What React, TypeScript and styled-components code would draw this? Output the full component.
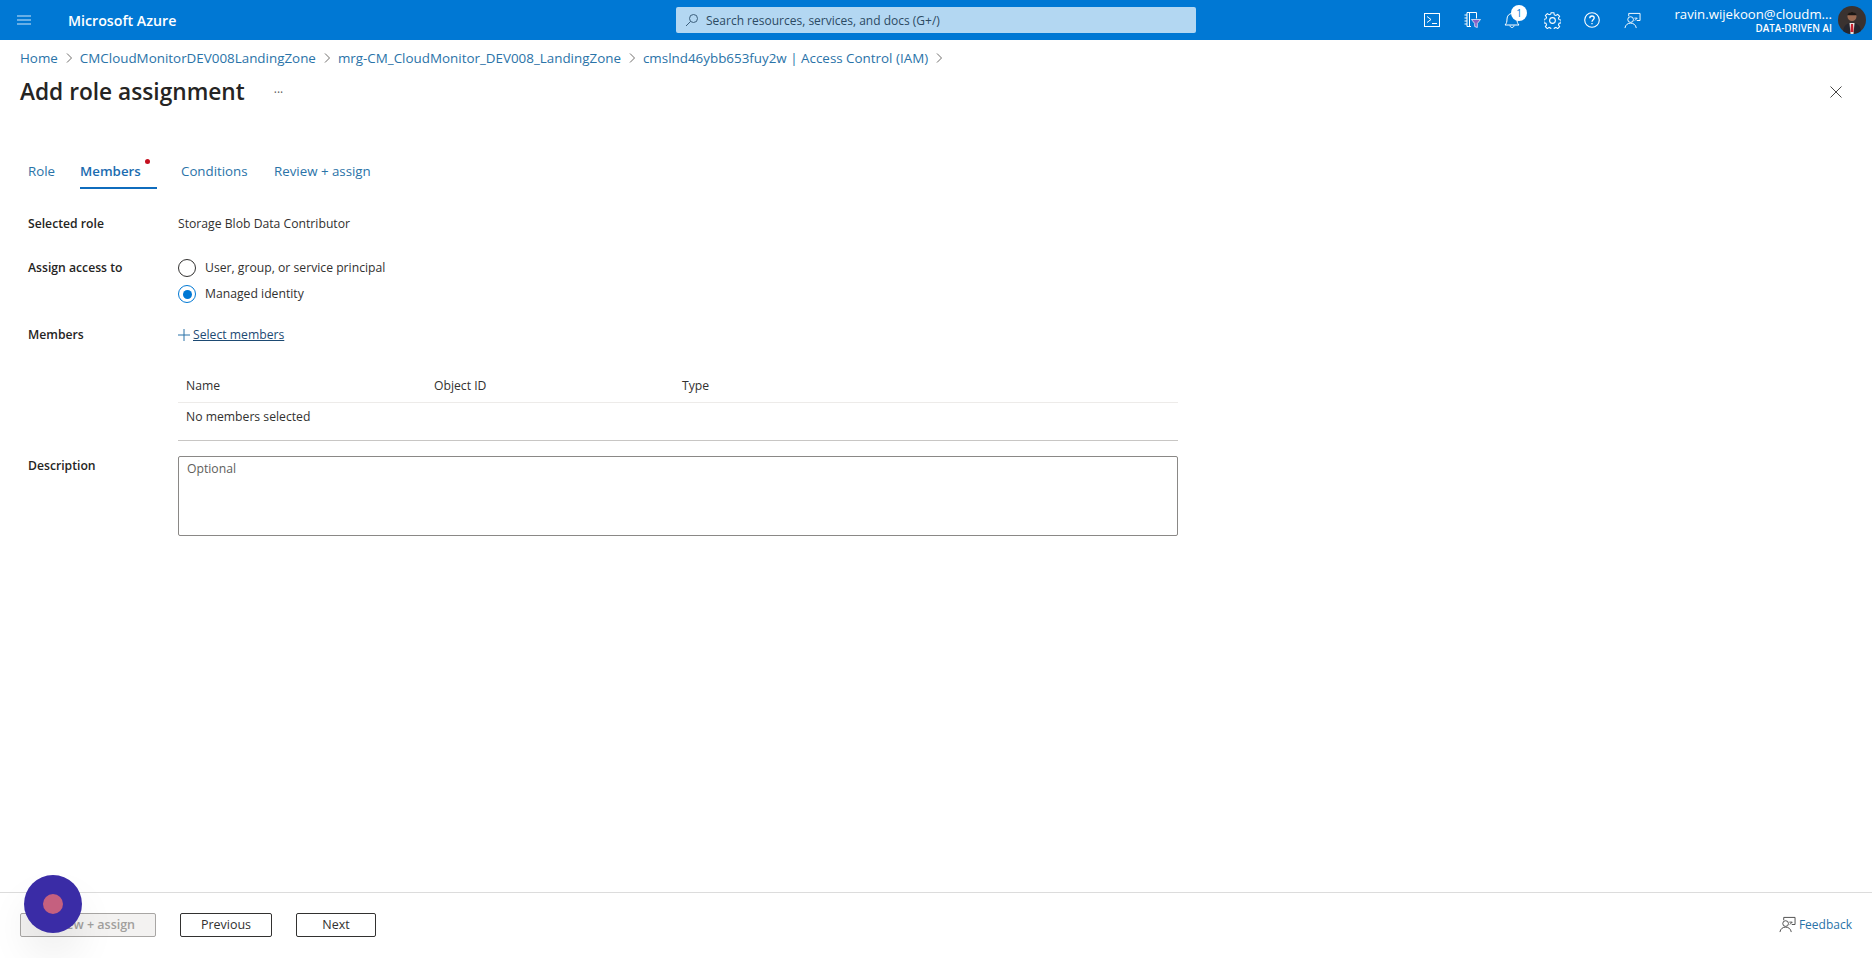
import { Fragment } from "react";
import styled, { createGlobalStyle } from "styled-components";

const GlobalStyle = createGlobalStyle`
  html, body {
    margin: 0;
    padding: 0;
    background: white;
    font-family: "Open Sans", "Liberation Sans", sans-serif;
    color: #323130;
  }
  * {
    box-sizing: border-box;
  }
`;

const Page = styled.div`
  position: relative;
  display: flex;
  flex-direction: column;
  width: 100%;
  height: 100vh;
  overflow: hidden;
`;

const TopBar = styled.header`
  display: flex;
  align-items: center;
  flex: none;
  height: 40px;
  background-color: #0078d4;
  color: white;
`;

const Brand = styled.div`
  display: flex;
  align-items: center;
  width: 676px;
  padding-left: 17px;
`;

const Burger = styled.svg`
  width: 14px;
  height: 10px;
  margin-right: 37px;
`;

const BrandName = styled.span`
  font-size: 14.2px;
  font-weight: 600;
`;

const SearchBox = styled.div`
  display: flex;
  align-items: center;
  gap: 7px;
  width: 520px;
  height: 26px;
  padding-left: 9px;
  border-radius: 2px;
  background-color: #b3d7f2;
  color: #2c4a63;
  font-size: 12px;
`;

const IconRow = styled.div`
  display: flex;
  margin-left: 216px;
`;

const IconButton = styled.div`
  position: relative;
  display: flex;
  align-items: center;
  justify-content: center;
  width: 40px;
  height: 40px;
`;

const Badge = styled.span`
  position: absolute;
  top: 5px;
  left: 19px;
  width: 16px;
  height: 16px;
  border-radius: 50%;
  background: white;
  color: #0078d4;
  font-size: 10px;
  line-height: 16px;
  text-align: center;
`;

const Account = styled.div`
  display: flex;
  flex-direction: column;
  align-items: flex-end;
  width: 180px;
  margin-right: 6px;
`;

const Email = styled.span`
  font-size: 13.2px;
  line-height: 18px;
  white-space: nowrap;
`;

const Tenant = styled.span`
  font-size: 9.8px;
  font-weight: 600;
  line-height: 12px;
`;

const Avatar = styled.svg`
  width: 28px;
  height: 28px;
`;

const Breadcrumb = styled.nav`
  display: flex;
  align-items: center;
  flex: none;
  gap: 6px;
  height: 36px;
  padding-left: 20px;
  color: #2a73a8;
  font-size: 13.4px;
`;

const Chevron = styled.svg`
  width: 6px;
  height: 10px;
  margin: 0 2px;
`;

const TitleRow = styled.div`
  display: flex;
  align-items: center;
  flex: none;
  height: 32px;
  padding: 0 30px 2px 20px;
`;

const Title = styled.h1`
  margin: 0;
  font-size: 22.7px;
  font-weight: 600;
  color: #252423;
`;

const More = styled.span`
  margin-left: 29px;
  margin-top: 2px;
  font-size: 12px;
  color: #605e5c;
`;

const CloseIcon = styled.svg`
  width: 12px;
  height: 12px;
  margin-left: auto;
  margin-top: 2px;
`;

const Tabs = styled.div`
  display: flex;
  flex: none;
  margin-top: 51px;
  padding-left: 28px;
`;

const Tab = styled.div<{ $active?: boolean; $width: number }>`
  position: relative;
  width: ${(p) => p.$width}px;
  height: 30px;
  color: ${(p) => (p.$active ? "#1b6cb0" : "#2a73a8")};
  font-size: 13.3px;
  font-weight: ${(p) => (p.$active ? 600 : 400)};
  line-height: 24px;

  &::after {
    content: "";
    display: ${(p) => (p.$active ? "block" : "none")};
    position: absolute;
    left: 0;
    bottom: 0;
    width: 77px;
    height: 2px;
    background-color: #0f6cbd;
  }
`;

const RequiredDot = styled.span`
  position: absolute;
  top: 0;
  left: 65px;
  width: 5px;
  height: 5px;
  border-radius: 50%;
  background-color: #c50f1f;
`;

const Form = styled.div`
  display: grid;
  grid-template-columns: 150px 1000px;
  padding: 25px 0 0 28px;
  font-size: 12.2px;
`;

const Label = styled.div<{ $gap: number }>`
  margin-bottom: ${(p) => p.$gap}px;
  font-weight: 600;
  line-height: 20px;
  color: #252423;
`;

const Value = styled.div<{ $gap: number }>`
  margin-bottom: ${(p) => p.$gap}px;
  line-height: 20px;
`;

const RadioRow = styled.div`
  display: flex;
  align-items: center;
  gap: 9px;
  height: 26px;
  margin-top: -3px;
  &:last-child {
    margin-top: 0;
  }
`;

const Radio = styled.span<{ $checked?: boolean }>`
  display: flex;
  align-items: center;
  justify-content: center;
  width: 18px;
  height: 18px;
  border: 1.5px solid ${(p) => (p.$checked ? "#0078d4" : "#323130")};
  border-radius: 50%;

  &::after {
    content: "";
    display: ${(p) => (p.$checked ? "block" : "none")};
    width: 9px;
    height: 9px;
    border-radius: 50%;
    background-color: #0078d4;
  }
`;

const SelectLink = styled.a`
  display: inline-flex;
  align-items: center;
  color: #1d4a73;
  text-decoration: underline;
`;

const PlusIcon = styled.svg`
  width: 12px;
  height: 12px;
  margin-right: 3px;
`;

const Table = styled.div`
  margin-top: 22px;
  margin-bottom: 15px;
  border-bottom: 1px solid #c8c6c4;
`;

const TableRow = styled.div<{ $head?: boolean }>`
  display: grid;
  grid-template-columns: repeat(3, 248px);
  align-items: center;
  height: ${(p) => (p.$head ? "34px" : "37px")};
  padding-left: 8px;
  padding-bottom: ${(p) => (p.$head ? "0" : "10px")};
  border-bottom: ${(p) => (p.$head ? "1px solid #edebe9" : "none")};
  color: #323130;
`;

const Textarea = styled.div`
  height: 80px;
  padding: 3px 8px;
  border: 1px solid #8a8886;
  border-radius: 2px;
  color: #605e5c;
  line-height: 18px;
`;

const Footer = styled.footer`
  display: flex;
  align-items: center;
  flex: none;
  gap: 24px;
  height: 66px;
  margin-top: auto;
  padding: 0 20px 2px 20px;
  border-top: 1px solid #dcdcdc;
`;

const FooterButton = styled.button<{ $disabled?: boolean; $width: number }>`
  width: ${(p) => p.$width}px;
  height: 24px;
  padding: 0;
  border: 1px solid ${(p) => (p.$disabled ? "#a8a6a4" : "#323130")};
  border-radius: 2px;
  background: ${(p) => (p.$disabled ? "#f3f2f1" : "white")};
  color: ${(p) => (p.$disabled ? "#a19f9d" : "#323130")};
  font-family: inherit;
  font-size: 12.5px;
  font-weight: ${(p) => (p.$disabled ? 600 : 400)};
  line-height: 22px;
`;

const FeedbackLink = styled.a`
  display: flex;
  align-items: center;
  gap: 3px;
  margin-left: auto;
  color: #2a73a8;
  font-size: 12px;
  text-decoration: none;
`;

const RecordDot = styled.div`
  position: absolute;
  left: 24px;
  top: 875px;
  display: flex;
  align-items: center;
  justify-content: center;
  width: 58px;
  height: 58px;
  border-radius: 50%;
  background-color: #3a2ca6;
  box-shadow: 0 24px 40px rgba(0, 0, 0, 0.07);

  &::after {
    content: "";
    width: 20px;
    height: 20px;
    border-radius: 50%;
    background-color: #c5607f;
  }
`;

function FeedbackIcon({ color, size }: { color: string; size: number }) {
  return (
    <svg width={size} height={size} viewBox="0 0 18 18" fill="none" stroke={color} strokeWidth="1">
      <path d="M5 4.5V1.5H17V9H13.5" />
      <circle cx="7" cy="8" r="3" />
      <path d="M1 17c.5-3.5 3-5.2 6-5.2s5.5 1.7 6 5.2" />
      <path d="M11 6.5h3l-2.5 2.5" />
    </svg>
  );
}

function CrumbChevron() {
  return (
    <Chevron viewBox="0 0 6 10" fill="none" stroke="#605e5c" strokeWidth="0.9">
      <path d="M1 .5 5.5 5 1 9.5" />
    </Chevron>
  );
}

export default function App() {
  const crumbs = [
    "Home",
    "CMCloudMonitorDEV008LandingZone",
    "mrg-CM_CloudMonitor_DEV008_LandingZone",
    "cmslnd46ybb653fuy2w | Access Control (IAM)",
  ];

  return (
    <Page>
      <GlobalStyle />
      <TopBar>
        <Brand>
          <Burger viewBox="0 0 14 10" fill="none" stroke="#cfe6f8" strokeWidth="1.2">
            <path d="M0 1h14M0 5h14M0 9h14" />
          </Burger>
          <BrandName>Microsoft Azure</BrandName>
        </Brand>
        <SearchBox>
          <svg width="14" height="14" viewBox="0 0 14 14" fill="none" stroke="#3c5f7c" strokeWidth="1">
            <circle cx="8.5" cy="5.5" r="4" />
            <path d="M5.5 8.5 1 13" />
          </svg>
          Search resources, services, and docs (G+/)
        </SearchBox>
        <IconRow>
          <IconButton>
            <svg width="16" height="14" viewBox="0 0 16 14" fill="none" stroke="white" strokeWidth="1">
              <rect x=".5" y=".5" width="15" height="13" />
              <path d="M3 3.5 7 6.5 3 9.5M8 10.5h5" />
            </svg>
          </IconButton>
          <IconButton>
            <svg width="17" height="16" viewBox="0 0 17 16" fill="none">
              <path d="M3 .5h9.500v6M7 14.500H3V.5M.5 3h2.500M.5 6h2.500M.5 9h2.500M.5 12h2.500M5.500.5v14" stroke="white" strokeWidth="1" />
              <path d="M7.500 7.500h9l-3.200 4v4l-2.600-1v-3z" fill="#8661c5" stroke="white" strokeWidth="0.7" />
            </svg>
          </IconButton>
          <IconButton>
            <svg width="16" height="16" viewBox="0 0 16 16" fill="none" stroke="white" strokeWidth="1">
              <path d="M1 13h14c-1.500-1.500-2-3-2-6 0-3-2-5.500-5-5.500S3 4 3 7c0 3-.5 4.500-2 6z" />
              <path d="M6 13.500c0 1.200 1 2 2 2s2-.8 2-2" />
            </svg>
            <Badge>1</Badge>
          </IconButton>
          <IconButton>
            <svg width="17" height="17" viewBox="0 0 16 16" fill="none" stroke="white" strokeWidth="1">
              <circle cx="8" cy="8" r="2.700" />
              <path d="M6.700.7h2.600l.4 2 1.500.6 1.700-1.100 1.800 1.800-1.100 1.700.6 1.500 2 .4v2.600l-2 .4-.6 1.500 1.100 1.700-1.800 1.800-1.700-1.100-1.500.6-.4 2H6.700l-.4-2-1.500-.6-1.700 1.100-1.800-1.800 1.100-1.700-.6-1.500-2-.4V6.900l2-.4.6-1.500-1.100-1.700 1.800-1.800 1.700 1.100 1.500-.6z" />
            </svg>
          </IconButton>
          <IconButton>
            <svg width="16" height="16" viewBox="0 0 16 16" fill="none" stroke="white" strokeWidth="1.100">
              <circle cx="8" cy="8" r="7.300" />
              <path d="M5.800 6.200C5.800 4.900 6.800 4 8 4s2.200.9 2.200 2.100c0 1.700-2.200 1.700-2.200 3.600" strokeWidth="1.300" />
              <path d="M8 11v1.300" strokeWidth="1.300" />
            </svg>
          </IconButton>
          <IconButton>
            <FeedbackIcon color="white" size={17} />
          </IconButton>
        </IconRow>
        <Account>
          <Email>ravin.wijekoon@cloudm...</Email>
          <Tenant>DATA-DRIVEN AI</Tenant>
        </Account>
        <Avatar viewBox="0 0 28 28">
          <circle cx="14" cy="14" r="14" fill="#3a3230" />
          <circle cx="14" cy="10.500" r="4.500" fill="#9a6a52" />
          <path d="M9.500 9c0-4 9-4 9 0l-1 .3h-7z" fill="#1a1715" />
          <path d="M5 25c1-7 5-8 9-8s8 1 9 8c-2.500 2-5.500 3-9 3s-6.500-1-9-3z" fill="#26262e" />
          <path d="M11.500 17h5l-1 11h-3z" fill="#e8e4e0" />
          <path d="M13 18h2l.6 8h-3.200z" fill="#c8202f" />
        </Avatar>
      </TopBar>

      <Breadcrumb>
        {crumbs.map((crumb) => (
          <Fragment key={crumb}>
            <span>{crumb}</span>
            <CrumbChevron />
          </Fragment>
        ))}
      </Breadcrumb>

      <TitleRow>
        <Title>Add role assignment</Title>
        <More>···</More>
        <CloseIcon viewBox="0 0 12 12" fill="none" stroke="#323130" strokeWidth="0.9">
          <path d="M.5.5l11 11M11.500.5l-11 11" />
        </CloseIcon>
      </TitleRow>

      <Tabs>
        <Tab $width={52}>Role</Tab>
        <Tab $width={101} $active>
          Members
          <RequiredDot />
        </Tab>
        <Tab $width={93}>Conditions</Tab>
        <Tab $width={100}>Review + assign</Tab>
      </Tabs>

      <Form>
        <Label $gap={24}>Selected role</Label>
        <Value $gap={24}>Storage Blob Data Contributor</Value>

        <Label $gap={18}>Assign access to</Label>
        <Value $gap={18}>
          <RadioRow>
            <Radio />
            User, group, or service principal
          </RadioRow>
          <RadioRow>
            <Radio $checked />
            Managed identity
          </RadioRow>
        </Value>

        <Label $gap={0}>Members</Label>
        <Value $gap={0}>
          <SelectLink href="#">
            <PlusIcon viewBox="0 0 12 12" fill="none" stroke="#2a73a8" strokeWidth="1">
              <path d="M6 0v12M0 6h12" />
            </PlusIcon>
            Select members
          </SelectLink>
        </Value>

        <div />
        <Table>
          <TableRow $head>
            <span>Name</span>
            <span>Object ID</span>
            <span>Type</span>
          </TableRow>
          <TableRow>
            <span>No members selected</span>
          </TableRow>
        </Table>

        <Label $gap={0}>Description</Label>
        <Textarea>Optional</Textarea>
      </Form>

      <Footer>
        <FooterButton $disabled $width={136}>
          Review + assign
        </FooterButton>
        <FooterButton $width={92}>Previous</FooterButton>
        <FooterButton $width={80}>Next</FooterButton>
        <FeedbackLink href="#">
          <FeedbackIcon color="#4a4a4a" size={17} />
          Feedback
        </FeedbackLink>
      </Footer>

      <RecordDot />
    </Page>
  );
}
